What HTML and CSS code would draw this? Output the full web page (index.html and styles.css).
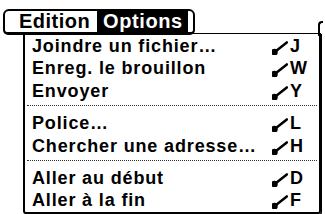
FILE: index.html
```html
<!DOCTYPE html>
<html lang="fr">
<head>
<meta charset="utf-8">
<link rel="stylesheet" href="styles.css">
</head>
<body>
<div class="screen">
  <div class="menubar">
    <span class="title">Edition</span>
    <span class="title active">Options</span>
  </div>
  <div class="dropdown">
    <div class="item"><span class="label">Joindre un fichier…</span><span class="sc"><svg class="stroke" viewBox="0 0 16 14"><circle cx="2.4" cy="11.2" r="2.1"/><line x1="2.4" y1="11.2" x2="14.8" y2="1.4"/></svg><span class="key">J</span></span></div>
    <div class="item"><span class="label">Enreg. le brouillon</span><span class="sc"><svg class="stroke" viewBox="0 0 16 14"><circle cx="2.4" cy="11.2" r="2.1"/><line x1="2.4" y1="11.2" x2="14.8" y2="1.4"/></svg><span class="key">W</span></span></div>
    <div class="item"><span class="label">Envoyer</span><span class="sc"><svg class="stroke" viewBox="0 0 16 14"><circle cx="2.4" cy="11.2" r="2.1"/><line x1="2.4" y1="11.2" x2="14.8" y2="1.4"/></svg><span class="key">Y</span></span></div>
    <div class="sep"></div>
    <div class="item"><span class="label">Police…</span><span class="sc"><svg class="stroke" viewBox="0 0 16 14"><circle cx="2.4" cy="11.2" r="2.1"/><line x1="2.4" y1="11.2" x2="14.8" y2="1.4"/></svg><span class="key">L</span></span></div>
    <div class="item"><span class="label">Chercher une adresse…</span><span class="sc"><svg class="stroke" viewBox="0 0 16 14"><circle cx="2.4" cy="11.2" r="2.1"/><line x1="2.4" y1="11.2" x2="14.8" y2="1.4"/></svg><span class="key">H</span></span></div>
    <div class="sep"></div>
    <div class="item"><span class="label">Aller au début</span><span class="sc"><svg class="stroke" viewBox="0 0 16 14"><circle cx="2.4" cy="11.2" r="2.1"/><line x1="2.4" y1="11.2" x2="14.8" y2="1.4"/></svg><span class="key">D</span></span></div>
    <div class="item"><span class="label">Aller à la fin</span><span class="sc"><svg class="stroke" viewBox="0 0 16 14"><circle cx="2.4" cy="11.2" r="2.1"/><line x1="2.4" y1="11.2" x2="14.8" y2="1.4"/></svg><span class="key">F</span></span></div>
  </div>
</div>
</body>
</html>
```

FILE: styles.css
```css
html, body {
  margin: 0;
  padding: 0;
  background: #fff;
}
body {
  width: 325px;
  height: 214px;
  overflow: hidden;
  font-family: "Liberation Sans", Arial, sans-serif;
  font-weight: bold;
  color: #000;
}
.screen {
  padding-top: 9px;
}
.menubar {
  display: flex;
  align-items: stretch;
  margin-left: 3px;
  width: 183px;
  height: 21px;
  border: 2px solid #000;
  border-bottom-width: 3px;
  border-radius: 6px 6px 5px 5px;
  padding: 0 5px 0 0;
  font-size: 20px;
  letter-spacing: 0.5px;
  line-height: 20px;
}
.title {
  display: block;
  width: 78px;
  padding-left: 14px;
}
.active {
  background: #000;
  color: #fff;
  width: 85px;
  padding-left: 6px;
  letter-spacing: 0.6px;
}
.dropdown {
  position: relative;
  margin-left: 23px;
  margin-top: -2px;
  width: 294px;
  border: 2px solid #000;
  border-top-width: 1px;
  border-radius: 0 0 3px 3px;
  box-shadow: 1px 1px 0 #000;
  padding: 1px 0 0 0;
  font-size: 18px;
  letter-spacing: 0.85px;
}
.dropdown::before {
  content: "";
  position: absolute;
  right: -4px;
  top: -13px;
  width: 3px;
  height: 13px;
  border-left: 2px solid #000;
  border-top: 2px solid #000;
  border-top-left-radius: 4px;
}
.item {
  display: flex;
  justify-content: space-between;
  align-items: flex-start;
  height: 22.4px;
  line-height: 22.4px;
  padding: 0 7px 0 7px;
}
.sc {
  display: flex;
  align-items: flex-start;
  width: 40px;
  flex-shrink: 0;
}
.stroke {
  flex-shrink: 0;
  width: 16px;
  height: 14px;
  margin-top: 6px;
  fill: #000;
  stroke: #000;
  stroke-width: 2.5;
  stroke-linecap: round;
}
.key {
  margin-left: 2px;
}
.sep {
  height: 0;
  margin: 3px 2px 6px 2px;
  border-top: 1px dotted #333;
}
```
